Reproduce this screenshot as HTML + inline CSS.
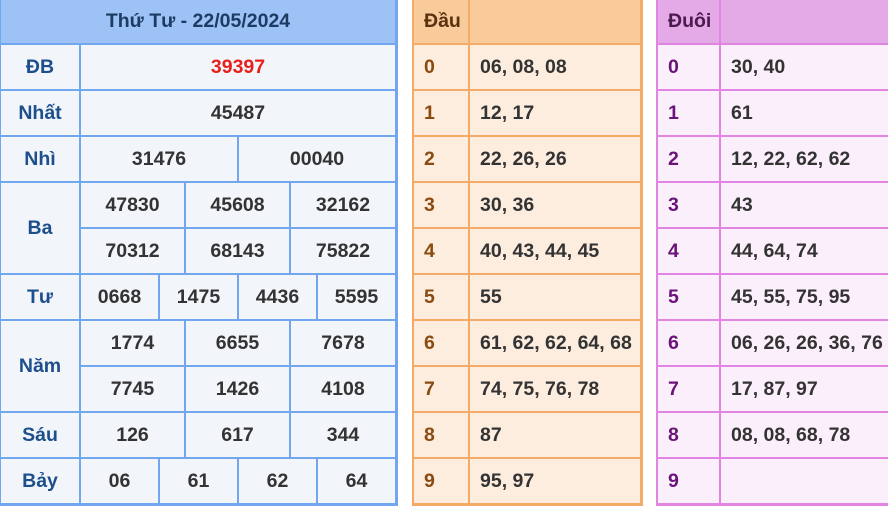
<!DOCTYPE html>
<html><head><meta charset="utf-8"><style>
*{margin:0;padding:0;box-sizing:border-box}
body{width:888px;height:506px;overflow:hidden;background:#fff;font-family:"Liberation Sans",Arial,sans-serif;font-weight:bold;font-size:19.5px;color:#333;position:relative}
.t{position:absolute;top:0;height:506px}
.c{position:absolute;display:flex;align-items:center;justify-content:center;height:44px}
.l{justify-content:flex-start;padding-left:10px}
#t1{left:0;width:398px;background:#72a6ee}
#t1 .c{background:#f2f5fa}
#t1 .h{background:#9cc2f6;color:#1d3b63;height:43px;top:0}
#t1 .lb{color:#1c4f8c}
#t2{left:412px;width:231px;background:#f4ab68}
#t2 .c{background:#fdeddf}
#t2 .h{background:#f9cb9b;color:#5a3210;height:43px;top:0}
#t2 .lb{color:#8a4a10}
#t3{left:656px;width:240px;background:#e184e2}
#t3 .c{background:#fbeffb}
#t3 .h{background:#e4aae8;color:#4d1a50;height:43px;top:0}
#t3 .lb{color:#6a1478}
.red{color:#e8201c}
</style></head><body>
<div class="t" id="t1">
<div class="c h" style="left:1px;width:394px">Thứ Tư - 22/05/2024</div>
<div class="c lb" style="left:1px;top:45px;width:78px">ĐB</div>
<div class="c red" style="left:81px;top:45px;width:314px">39397</div>
<div class="c lb" style="left:1px;top:91px;width:78px">Nhất</div>
<div class="c" style="left:81px;top:91px;width:314px">45487</div>
<div class="c lb" style="left:1px;top:137px;width:78px">Nhì</div>
<div class="c" style="left:81px;top:137px;width:156px">31476</div>
<div class="c" style="left:239px;top:137px;width:156px">00040</div>
<div class="c lb" style="left:1px;top:183px;width:78px;height:90px">Ba</div>
<div class="c" style="left:81px;top:183px;width:103px">47830</div>
<div class="c" style="left:186px;top:183px;width:103px">45608</div>
<div class="c" style="left:291px;top:183px;width:104px">32162</div>
<div class="c" style="left:81px;top:229px;width:103px">70312</div>
<div class="c" style="left:186px;top:229px;width:103px">68143</div>
<div class="c" style="left:291px;top:229px;width:104px">75822</div>
<div class="c lb" style="left:1px;top:275px;width:78px">Tư</div>
<div class="c" style="left:81px;top:275px;width:77px">0668</div>
<div class="c" style="left:160px;top:275px;width:77px">1475</div>
<div class="c" style="left:239px;top:275px;width:77px">4436</div>
<div class="c" style="left:318px;top:275px;width:77px">5595</div>
<div class="c lb" style="left:1px;top:321px;width:78px;height:90px">Năm</div>
<div class="c" style="left:81px;top:321px;width:103px">1774</div>
<div class="c" style="left:186px;top:321px;width:103px">6655</div>
<div class="c" style="left:291px;top:321px;width:104px">7678</div>
<div class="c" style="left:81px;top:367px;width:103px">7745</div>
<div class="c" style="left:186px;top:367px;width:103px">1426</div>
<div class="c" style="left:291px;top:367px;width:104px">4108</div>
<div class="c lb" style="left:1px;top:413px;width:78px">Sáu</div>
<div class="c" style="left:81px;top:413px;width:103px">126</div>
<div class="c" style="left:186px;top:413px;width:103px">617</div>
<div class="c" style="left:291px;top:413px;width:104px">344</div>
<div class="c lb" style="left:1px;top:459px;width:78px">Bảy</div>
<div class="c" style="left:81px;top:459px;width:77px">06</div>
<div class="c" style="left:160px;top:459px;width:77px">61</div>
<div class="c" style="left:239px;top:459px;width:77px">62</div>
<div class="c" style="left:318px;top:459px;width:77px">64</div>
</div>

<div class="t" id="t2">
<div class="c h l" style="left:2px;width:54px">Đầu</div>
<div class="c h" style="left:58px;width:170px"></div>
<div class="c l lb" style="left:2px;top:45px;width:54px">0</div><div class="c l" style="left:58px;top:45px;width:170px">06, 08, 08</div>
<div class="c l lb" style="left:2px;top:91px;width:54px">1</div><div class="c l" style="left:58px;top:91px;width:170px">12, 17</div>
<div class="c l lb" style="left:2px;top:137px;width:54px">2</div><div class="c l" style="left:58px;top:137px;width:170px">22, 26, 26</div>
<div class="c l lb" style="left:2px;top:183px;width:54px">3</div><div class="c l" style="left:58px;top:183px;width:170px">30, 36</div>
<div class="c l lb" style="left:2px;top:229px;width:54px">4</div><div class="c l" style="left:58px;top:229px;width:170px">40, 43, 44, 45</div>
<div class="c l lb" style="left:2px;top:275px;width:54px">5</div><div class="c l" style="left:58px;top:275px;width:170px">55</div>
<div class="c l lb" style="left:2px;top:321px;width:54px">6</div><div class="c l" style="left:58px;top:321px;width:170px">61, 62, 62, 64, 68</div>
<div class="c l lb" style="left:2px;top:367px;width:54px">7</div><div class="c l" style="left:58px;top:367px;width:170px">74, 75, 76, 78</div>
<div class="c l lb" style="left:2px;top:413px;width:54px">8</div><div class="c l" style="left:58px;top:413px;width:170px">87</div>
<div class="c l lb" style="left:2px;top:459px;width:54px">9</div><div class="c l" style="left:58px;top:459px;width:170px">95, 97</div>
</div>

<div class="t" id="t3">
<div class="c h l" style="left:2px;width:61px">Đuôi</div>
<div class="c h" style="left:65px;width:180px"></div>
<div class="c l lb" style="left:2px;top:45px;width:61px">0</div><div class="c l" style="left:65px;top:45px;width:180px">30, 40</div>
<div class="c l lb" style="left:2px;top:91px;width:61px">1</div><div class="c l" style="left:65px;top:91px;width:180px">61</div>
<div class="c l lb" style="left:2px;top:137px;width:61px">2</div><div class="c l" style="left:65px;top:137px;width:180px">12, 22, 62, 62</div>
<div class="c l lb" style="left:2px;top:183px;width:61px">3</div><div class="c l" style="left:65px;top:183px;width:180px">43</div>
<div class="c l lb" style="left:2px;top:229px;width:61px">4</div><div class="c l" style="left:65px;top:229px;width:180px">44, 64, 74</div>
<div class="c l lb" style="left:2px;top:275px;width:61px">5</div><div class="c l" style="left:65px;top:275px;width:180px">45, 55, 75, 95</div>
<div class="c l lb" style="left:2px;top:321px;width:61px">6</div><div class="c l" style="left:65px;top:321px;width:180px">06, 26, 26, 36, 76</div>
<div class="c l lb" style="left:2px;top:367px;width:61px">7</div><div class="c l" style="left:65px;top:367px;width:180px">17, 87, 97</div>
<div class="c l lb" style="left:2px;top:413px;width:61px">8</div><div class="c l" style="left:65px;top:413px;width:180px">08, 08, 68, 78</div>
<div class="c l lb" style="left:2px;top:459px;width:61px">9</div><div class="c l" style="left:65px;top:459px;width:180px"></div>
</div>
</body></html>
